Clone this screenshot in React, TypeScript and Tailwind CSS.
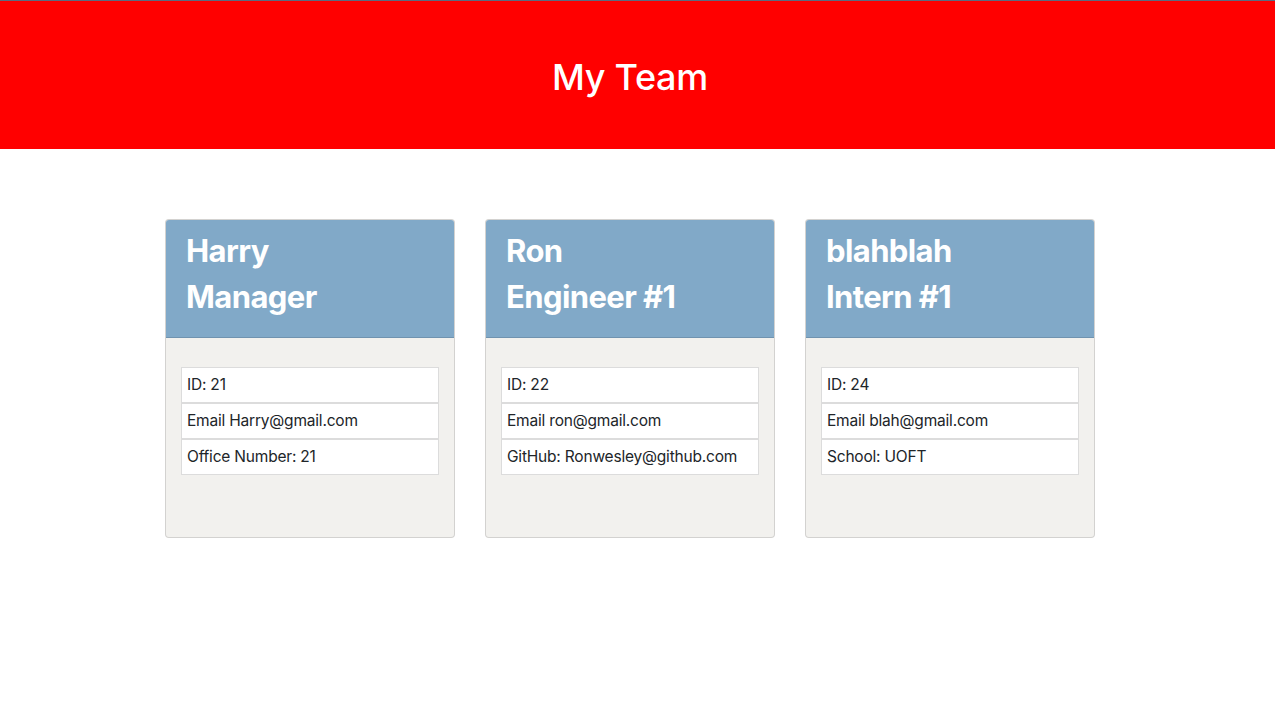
import React from 'react';

interface Member {
    name: string;
    role: string;
    details: string[];
}

const team: Member[] = [
    {name: 'Harry', role: 'Manager', details: ['ID: 21', 'Email Harry@gmail.com', 'Office Number: 21']},
    {name: 'Ron', role: 'Engineer #1', details: ['ID: 22', 'Email ron@gmail.com', 'GitHub: Ronwesley@github.com']},
    {name: 'blahblah', role: 'Intern #1', details: ['ID: 24', 'Email blah@gmail.com', 'School: UOFT']},
];

export default function App() {
    return (
        <div className="min-h-[710px] bg-white text-[#212529] font-['Inter',_'Liberation_Sans',_sans-serif]">
            <header className="border-t border-[#5b6b80] bg-[#ff0000] h-[149px] flex items-center">
                <div className="w-[1260px] flex justify-center">
                    <h1 className="text-[36px] leading-[48px] font-medium text-white pt-[4px] tracking-[-0.3px]">My Team</h1>
                </div>
            </header>

            <main className="w-[1260px] flex justify-center gap-[30px] pt-[70px]">
                {team.map((member) => (
                    <article
                        key={member.name}
                        className="w-[290px] h-[319px] flex flex-col border border-black/[.125] rounded-[4px] overflow-hidden bg-[#f2f1ee]"
                    >
                        <div className="bg-[#81a9c8] px-[20px] pt-[12px] pb-[12px] border-b border-black/[.125] text-white">
                            <h2 className="text-[31px] leading-[38.4px] font-bold mb-[8px] tracking-[-0.6px]">{member.name}</h2>
                            <h2 className="text-[31px] leading-[38.4px] font-bold mb-[8px] tracking-[-0.6px]">{member.role}</h2>
                        </div>
                        <div className="px-[15px] pt-[29px]">
                            <ul className="flex flex-col">
                                {member.details.map((item) => (
                                    <li
                                        key={item}
                                        className="h-[36px] bg-white border border-[#dcdcdc] px-[5px] flex items-center text-[15.5px] leading-[24px] tracking-[-0.2px]"
                                    >
                                        {item}
                                    </li>
                                ))}
                            </ul>
                        </div>
                    </article>
                ))}
            </main>
        </div>
    );
}
